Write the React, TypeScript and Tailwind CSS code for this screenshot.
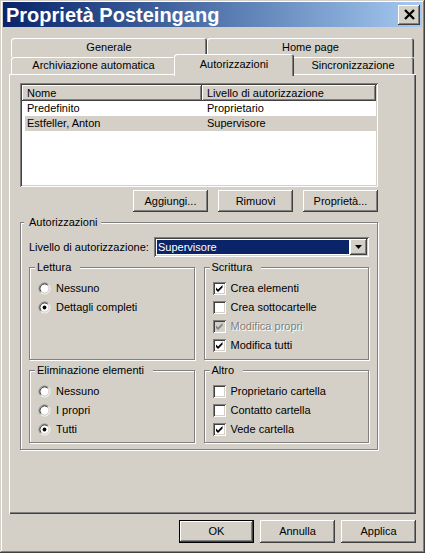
import React from "react";

const raised =
  "shadow-[inset_-1px_-1px_#404040,inset_1px_1px_#ffffff,inset_-2px_-2px_#808080]";
const sunken =
  "shadow-[inset_1px_1px_#808080,inset_-1px_-1px_#ffffff,inset_2px_2px_#404040,inset_-2px_-2px_#d4d0c8]";
const etched =
  "border border-[#808080] shadow-[inset_1px_1px_#ffffff,1px_1px_#ffffff]";

function Button({ label, isDefault }: { label: string; isDefault?: boolean }) {
  if (isDefault) {
    return (
      <div className="w-[75px] h-[23px] border border-black bg-[#d4d0c8]">
        <div className={`w-full h-full flex items-center justify-center ${raised}`}>
          {label}
        </div>
      </div>
    );
  }
  return (
    <div className={`w-[75px] h-full flex items-center justify-center bg-[#d4d0c8] ${raised}`}>
      {label}
    </div>
  );
}

function Radio({ checked }: { checked?: boolean }) {
  return (
    <svg width="13" height="13" viewBox="0 0 13 13" className="shrink-0">
      <circle cx="6.5" cy="6.5" r="4.2" fill="#ffffff" />
      <path d="M2.61 10.39 A5.5 5.5 0 0 1 10.39 2.61" stroke="#808080" fill="none" />
      <path d="M10.39 2.61 A5.5 5.5 0 0 1 2.61 10.39" stroke="#ffffff" fill="none" />
      <path d="M3.32 9.68 A4.5 4.5 0 0 1 9.68 3.32" stroke="#404040" fill="none" />
      <path d="M9.68 3.32 A4.5 4.5 0 0 1 3.32 9.68" stroke="#d4d0c8" fill="none" />
      {checked && <circle cx="6.5" cy="6.5" r="1.9" fill="#000000" />}
    </svg>
  );
}

function Check({ checked, disabled }: { checked?: boolean; disabled?: boolean }) {
  return (
    <div
      className={`w-[13px] h-[13px] shrink-0 ${disabled ? "bg-[#d4d0c8]" : "bg-white"} ${sunken}`}
    >
      {checked && (
        <svg width="13" height="13" viewBox="0 0 13 13">
          <path
            d="M3 5.5 L5 7.5 L9.5 3 L9.5 5.5 L5 10 L3 8 Z"
            fill={disabled ? "#808080" : "#000000"}
          />
        </svg>
      )}
    </div>
  );
}

function Group({
  title,
  children,
  pb,
}: {
  title: string;
  children: React.ReactNode;
  pb: string;
}) {
  return (
    <div className={`flex flex-col pl-[8px] ${pb} ${etched}`}>
      <div className="-mt-[7px] -ml-[3px] pl-[2px] pr-[9px] self-start leading-[13px] bg-[#d4d0c8]">
        {title}
      </div>
      <div className="mt-[5px] flex flex-col">{children}</div>
    </div>
  );
}

function Option({
  label,
  kind,
  checked,
  disabled,
}: {
  label: string;
  kind: "radio" | "check";
  checked?: boolean;
  disabled?: boolean;
}) {
  return (
    <div className="h-[19px] flex items-center gap-[5px]">
      {kind === "radio" ? <Radio checked={checked} /> : <Check checked={checked} disabled={disabled} />}
      <span className={disabled ? "text-[#808080] [text-shadow:1px_1px_0_#ffffff]" : ""}>{label}</span>
    </div>
  );
}

const tabShape =
  "flex items-center justify-center rounded-t-[3px] bg-[#d4d0c8] shadow-[inset_1px_1px_#ffffff,inset_-1px_0_#404040,inset_-2px_0_#808080]";

export default function App() {
  return (
    <div className="w-[425px] h-[553px] flex flex-col bg-[#d4d0c8] pt-[2px] px-[3px] pb-[3px] text-[11px] text-black font-['Liberation_Sans',Arial,sans-serif] shadow-[inset_-1px_-1px_#404040,inset_1px_1px_#d4d0c8,inset_-2px_-2px_#808080,inset_2px_2px_#ffffff]">
      {/* Title bar */}
      <div className="h-[25px] flex items-center justify-between pl-[3px] pr-[2px] bg-linear-to-r from-[#0a246a] to-[#a6caf0]">
        <span className="text-white font-bold text-[20px] leading-none">
          Proprietà Posteingang
        </span>
        <div className={`w-[22px] h-[20px] flex items-center justify-center bg-[#d4d0c8] ${raised}`}>
          <svg width="11" height="11" viewBox="0 0 11 11">
            <path d="M1 1 L10 10 M10 1 L1 10" stroke="#000000" strokeWidth="2.3" />
          </svg>
        </div>
      </div>

      {/* Tabs */}
      <div className="mt-[11px] mx-[6px] flex flex-col">
        <div className="flex h-[19px] px-[2px]">
          <div className={`w-[196px] ${tabShape}`}>Generale</div>
          <div className={`w-[207px] ${tabShape}`}>Home page</div>
        </div>
        <div className="flex h-[17px] px-[2px] items-start">
          <div className={`w-[165px] h-[17px] ${tabShape}`}>Archiviazione automatica</div>
          <div className={`relative z-10 w-[120px] h-[22px] -mt-[3px] -mx-[2px] pb-[2px] ${tabShape}`}>
            Autorizzazioni
          </div>
          <div className={`w-[122px] h-[17px] ${tabShape}`}>Sincronizzazione</div>
        </div>

        {/* Panel */}
        <div className="h-[440px] pt-[9px] pl-[11px] flex flex-col shadow-[inset_1px_1px_#ffffff,inset_-1px_-1px_#404040,inset_-2px_-2px_#808080]">
          <div className="w-[358px] flex flex-col">
            {/* List view */}
            <div className={`h-[104px] p-[2px] bg-white ${sunken}`}>
              <div className="flex h-[16px]">
                <div className={`w-[180px] pl-[5px] flex items-center bg-[#d4d0c8] ${raised}`}>Nome</div>
                <div className={`flex-1 pl-[5px] flex items-center bg-[#d4d0c8] ${raised}`}>
                  Livello di autorizzazione
                </div>
              </div>
              <div className="flex h-[15px] items-center ml-[3px]">
                <span className="w-[177px] pl-[2px]">Predefinito</span>
                <span className="pl-[5px]">Proprietario</span>
              </div>
              <div className="flex h-[15px] items-center ml-[3px] bg-[#d4d0c8]">
                <span className="w-[177px] pl-[2px]">Estfeller, Anton</span>
                <span className="pl-[5px]">Supervisore</span>
              </div>
            </div>

            <div className="mt-[3px] h-[22px] flex justify-end gap-[10px]">
              <Button label="Aggiungi..." />
              <Button label="Rimuovi" />
              <Button label="Proprietà..." />
            </div>

            {/* Autorizzazioni group */}
            <div className={`mt-[10px] flex flex-col px-[8px] pb-[6px] ${etched}`}>
              <div className="-mt-[7px] -ml-[5px] pl-[5px] pr-[4px] self-start leading-[13px] bg-[#d4d0c8]">
                Autorizzazioni
              </div>
              <div className="mt-[8px] h-[20px] flex items-center justify-between">
                <span>Livello di autorizzazione:</span>
                <div className={`w-[215px] h-[20px] p-[2px] flex bg-white ${sunken}`}>
                  <div className="flex-1 m-[1px] pl-[1px] flex items-center bg-[#0a246a] text-white">
                    Supervisore
                  </div>
                  <div className={`w-[17px] flex items-center justify-center bg-[#d4d0c8] ${raised}`}>
                    <svg width="7" height="4" viewBox="0 0 7 4">
                      <path d="M0 0 L7 0 L3.5 4 Z" fill="#000000" />
                    </svg>
                  </div>
                </div>
              </div>

              <div className="mt-[10px] grid grid-cols-2 gap-x-[9px] gap-y-[10px]">
                <Group title="Lettura" pb="pb-[4px]">
                  <Option kind="radio" label="Nessuno" />
                  <Option kind="radio" label="Dettagli completi" checked />
                </Group>
                <Group title="Scrittura" pb="pb-[4px]">
                  <Option kind="check" label="Crea elementi" checked />
                  <Option kind="check" label="Crea sottocartelle" />
                  <Option kind="check" label="Modifica propri" checked disabled />
                  <Option kind="check" label="Modifica tutti" checked />
                </Group>
                <Group title="Eliminazione elementi" pb="pb-[3px]">
                  <Option kind="radio" label="Nessuno" />
                  <Option kind="radio" label="I propri" />
                  <Option kind="radio" label="Tutti" checked />
                </Group>
                <Group title="Altro" pb="pb-[3px]">
                  <Option kind="check" label="Proprietario cartella" />
                  <Option kind="check" label="Contatto cartella" />
                  <Option kind="check" label="Vede cartella" checked />
                </Group>
              </div>
            </div>
          </div>
        </div>
      </div>

      {/* Dialog buttons */}
      <div className="mt-[6px] mx-[6px] h-[23px] flex justify-end gap-[6px]">
        <Button label="OK" isDefault />
        <Button label="Annulla" />
        <Button label="Applica" />
      </div>
    </div>
  );
}
